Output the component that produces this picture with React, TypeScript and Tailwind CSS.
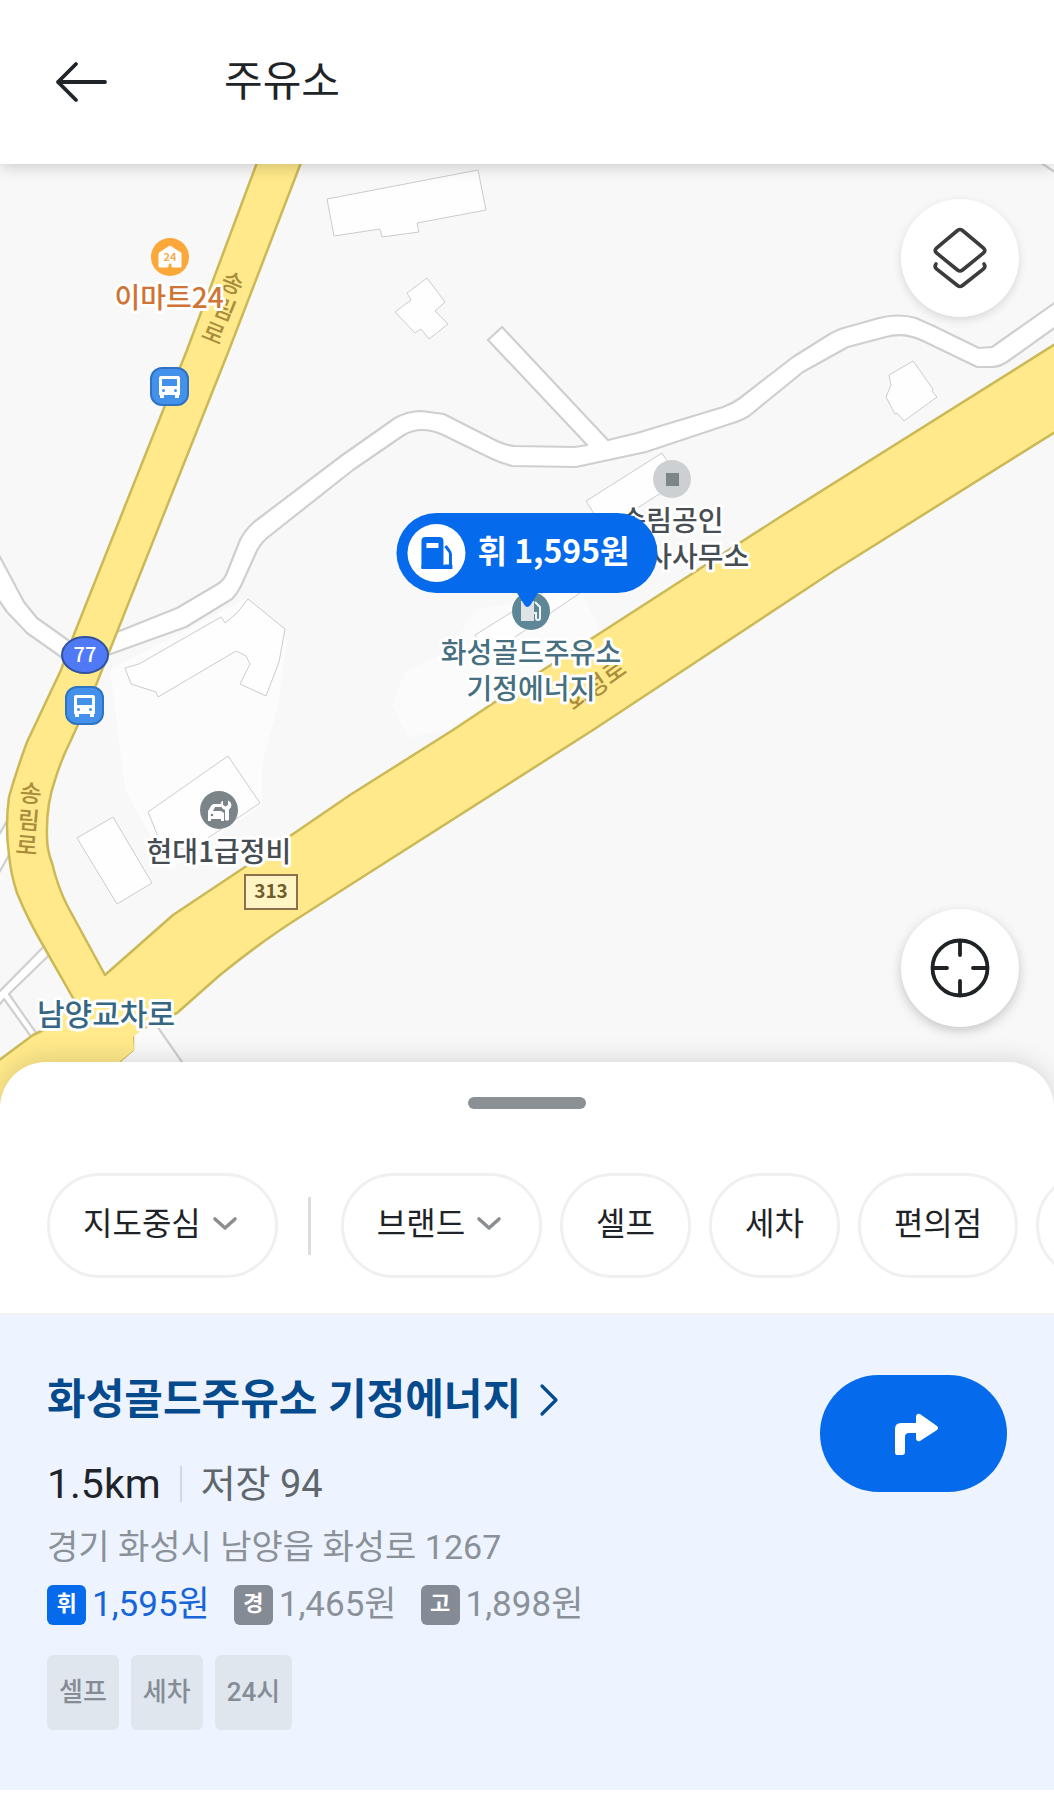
import React from "react";

const uiFont = "font-['Roboto','Noto_Sans_CJK_KR',sans-serif]";
const krFont = "font-['Noto_Sans_CJK_KR',sans-serif]";

function BusStop({ x, y }: { x: number; y: number }) {
  return (
    <g transform={`translate(${x} ${y})`}>
      <rect x="1" y="1" width="37" height="37" rx="11" fill="#4391ea" stroke="#2f73c4" strokeWidth="2" />
      <path
        d="M11 9h17a2 2 0 0 1 2 2v17h-1v3h-4v-3H14v3h-4v-3H9V11a2 2 0 0 1 2-2Z"
        fill="#fff"
      />
      <rect x="12" y="12" width="15" height="7" fill="#4391ea" />
      <circle cx="13.500" cy="23.500" r="1.500" fill="#4391ea" />
      <circle cx="25.500" cy="23.500" r="1.500" fill="#4391ea" />
    </g>
  );
}

function MapDrawing() {
  return (
    <svg
      viewBox="0 164 1054 944"
      preserveAspectRatio="xMidYMid slice"
      className={`absolute inset-0 size-full ${krFont}`}
      role="img"
      aria-label="화성골드주유소 기정에너지 주변 지도"
    >
      <rect x="0" y="164" width="1054" height="944" fill="#f8f8f8" />

      {/* plots */}
      <path d="M110 670 L245 599 L287 640 L278 705 L262 765 L262 805 L170 870 L125 790Z" fill="#fcfcfc" />
      <path d="M475 610 L580 590 L600 630 L450 728 L408 738 L392 705 L405 672 L450 650Z" fill="#fbfbfb" />

      {/* buildings */}
      <g fill="#fefefe" stroke="#cccccc" strokeWidth="1">
        <path d="M327 199 L478 170 L486 210 L417 223 L419 232 L382 237 L380 229 L334 236Z" />
        <path d="M427 278 L445 302 L435 311 L448 324 L429 339 L421 329 L415 333 L395 312 L411 300 L407 293Z" />
        <path d="M913 361 L933 389 L932 391 L937 397 L904 421 L897 413 L895 414 L886 397 L891 385 L889 375Z" />
        <path d="M586 501 L662 453 L680 481 L604 529Z" />
        <path d="M475 635 L568 577 L580 593 L515 637 L485 655Z" />
        <path d="M248 599 L285 629 L279 662 L266 696 L240 684 L250 664 L246 656 L236 651 L158 697 L156 692 L131 684 L125 668 L139 664 L221 617 L225 623 L237 613Z" />
        <path d="M228 756 L260 803 L190 850 L162 846 L148 812Z" />
        <path d="M113 817 L152 883 L117 904 L77 838Z" />
      </g>

      {/* local roads */}
      <g fill="#ffffff" stroke="#cfcfcf" strokeWidth="2.200" strokeLinejoin="round">
        <path d="M-5 547 L0 557 L24 602 L37 618 L68 640 L90 655 L80 670 L61 657 L27 633 L7 612 L0 602 L-5 594Z" />
        <path d="M95 640 L122 630 L177 608 L216 585 Q223 581 226 575 L240 540 Q245 530 254 522 L341 456 L395 418 Q408 411 421 411 L444 414 L497 441 Q506 445 514 446 L575 447 L587 445 L488 340 L502 327 L608 440 L637 433 L723 407 Q732 404 740 398 L793 357 L828 335 Q838 329 847 327 L879 318 Q898 313 916 318 L936 327 L979 348 L992 347 L1060 299 L1060 324 L1007 362 Q999 367 992 367 L977 367 L923 341 Q904 332 886 337 L848 347 L803 372 L749 416 Q741 421 730 424 L646 452 L576 467 L512 466 Q500 463 490 458 L443 435 Q421 425 404 435 L353 470 L267 538 Q259 545 255 555 L241 586 Q237 594 232 599 L186 627 L108 655Z" />
        <path d="M60 930 L-5 996 L-5 1010 L4 999 L32 1038 L39 1037 L9 994 L70 935Z" />
        <path d="M12 812 L-5 842 L-5 880 L14 846Z" />
        <path d="M1041 163 L1058 174 L1058 160Z" fill="#fcfcfc" />
        <path d="M125 980 L182 1062 L212 1108 L100 1108Z" fill="#fafafa" />
      </g>

      {/* trunk roads */}
      <path
        d="M258 160 L187 350 L73 637 L61 670 L27 742 Q16 772 9 797 Q5 826 9 855 Q11 875 17 893 Q28 920 44 947 L73 998 L85 1010 L33 1035 L-6 1064 L-6 1112 L50 1112 L120 1061 L133 1050 L133 1033 L177 1013 L220 975 Q262 941 300 917 L350 885 L593 730 L835 570 L1060 429 L1060 341 L780 517 L543 670 L453 730 L350 795 L245 867 L173 915 L105 975 L68 907 Q58 888 52 863 Q47 850 47 837 Q46 805 55 780 Q61 760 71 740 L96 685 L229 350 L302 160Z"
        fill="#ffe98a"
        stroke="#cbb957"
        strokeWidth="2.500"
        strokeLinejoin="round"
      />
      <path d="M70 1005 L170 1005 L133 1037 L134 1050 L118 1063 L60 1112 L10 1090 L45 1038Z" fill="#ffe98a" />

      {/* road names */}
      <g
        fontSize="24"
        fontWeight="500"
        fill="#a98c3c"
        stroke="#ffe98a"
        strokeWidth="2"
        paintOrder="stroke"
      >
        <text x="219 211 200" y="287 313 337" rotate="22">
          송림로
        </text>
        <text x="19 17 15" y="801 828 853" rotate="5">
          송림로
        </text>
        <text x="574 592 610" y="712 699 685" rotate="-35">
          화성로
        </text>
      </g>

      {/* places */}
      <circle cx="170" cy="257" r="19" fill="#fba83a" />
      <path d="M159 267v-14l11-7 11 7v14h-9v-2a2 2 0 0 0-4 0v2Z" fill="#fff" stroke="#fff" strokeLinejoin="round" />
      <text x="170" y="261" textAnchor="middle" fontSize="11" fontWeight="700" fill="#f3ab55">
        24
      </text>

      <BusStop x={150} y={367} />
      <BusStop x={65} y={686} />

      <ellipse cx="85" cy="655" rx="23" ry="18" fill="#5079f6" stroke="#31529f" strokeWidth="2" />
      <text x="85" y="662" textAnchor="middle" fontSize="20" fontWeight="500" fill="#fff">
        77
      </text>

      <circle cx="672" cy="479" r="19" fill="#cdd0d3" />
      <rect x="666" y="473" width="13" height="13" fill="#7d8589" />

      <circle cx="531" cy="611" r="19" fill="#5d8796" />
      <path d="M521 601h13v20h-13z" fill="#dfe3e6" />
      <path d="M535 602l5 5v11a2 2 0 0 1-4 0v-5h-2" fill="none" stroke="#f2f5f6" strokeWidth="2" />

      <circle cx="219" cy="810" r="19" fill="#7b8488" />
      <path d="M208 811l3-5q1-2 3-2h7v3h-6l-2 4h8l3 2v8h-3v-2h-10v2h-3v-8Z" fill="#fff" />
      <circle cx="212" cy="815" r="1.300" fill="#7b8488" />
      <path
        d="M225.500 820v-10.500a5 5 0 0 1-3-8.500v4l3 2 3-2v-4a5 5 0 0 1 0 8.500V820Z"
        fill="#fff"
        stroke="#fff"
        strokeLinejoin="round"
      />

      <rect x="245" y="875" width="52" height="34" fill="#fff5c4" stroke="#8d6f50" strokeWidth="2" />
      <text x="271" y="898" textAnchor="middle" fontSize="19" fontWeight="700" fill="#6f5d2c">
        313
      </text>

      <g
        fontSize="28"
        fontWeight="500"
        stroke="#ffffff"
        strokeWidth="6"
        strokeLinejoin="round"
        paintOrder="stroke"
        textAnchor="middle"
      >
        <text x="169" y="308" fill="#cf7434">
          이마트24
        </text>
        <text x="219" y="862" fill="#454d53">
          현대1급정비
        </text>
        <text x="672" y="531" fill="#474e53">
          송림공인
        </text>
        <text x="672" y="567" fill="#474e53">
          중개사사무소
        </text>
        <text x="531" y="663" fill="#466f7f">
          화성골드주유소
        </text>
        <text x="531" y="699" fill="#466f7f">
          기정에너지
        </text>
        <text x="106" y="1025" fontSize="30" fill="#356785">
          남양교차로
        </text>
      </g>
    </svg>
  );
}

function Chevron() {
  return (
    <svg viewBox="0 0 28 28" className="size-7" fill="none" aria-hidden="true">
      <path d="M4 9l10 9 10-9" stroke="#8c8f92" strokeWidth="3.600" strokeLinecap="round" strokeLinejoin="round" />
    </svg>
  );
}

function Chip({ label, menu = false }: { label: string; menu?: boolean }) {
  return (
    <button
      type="button"
      aria-haspopup={menu ? "listbox" : undefined}
      className={`flex h-[105px] shrink-0 items-center gap-2.5 rounded-full border-[3px] border-[#f0f0f1] bg-white pb-1 text-[32px] leading-10 text-[#1f2327] ${
        menu ? "pr-9 pl-[33px]" : "px-[33px]"
      }`}
    >
      <span>{label}</span>
      {menu && <Chevron />}
    </button>
  );
}

const prices = [
  { mark: "휘", price: "1,595원", active: true },
  { mark: "경", price: "1,465원", active: false },
  { mark: "고", price: "1,898원", active: false },
];

const tags = ["셀프", "세차", "24시"];

export default function App() {
  return (
    <div className={`flex min-h-screen flex-col overflow-hidden bg-white ${uiFont}`}>
      <header className="relative z-10 flex h-[164px] shrink-0 items-center gap-28 bg-white px-[52px] shadow-[0_2px_16px_rgba(0,0,0,0.2)]">
        <button type="button" aria-label="뒤로" className="size-15">
          <svg viewBox="0 0 60 60" className="size-full" fill="none" aria-hidden="true">
            <path
              d="M53 30H6M24 12L6 30l18 18"
              stroke="#1f2428"
              strokeWidth="3.800"
              strokeLinecap="round"
              strokeLinejoin="round"
            />
          </svg>
        </button>
        <h1 className="text-[42px] leading-[60px] text-[#1f2428]">주유소</h1>
      </header>

      <main className="flex flex-1 flex-col">
        <section aria-label="지도" className="relative min-h-[600px] flex-1 overflow-hidden">
          <MapDrawing />

          <button
            type="button"
            className="absolute top-[37%] left-1/2 flex h-20 -translate-x-1/2 items-center gap-3 rounded-full bg-[#056aeb] pr-7 pl-[11px] text-white"
          >
            <span className="flex size-[58px] shrink-0 items-center justify-center rounded-full bg-white">
              <svg viewBox="0 0 34 34" className="size-[34px]" aria-hidden="true">
                <path d="M2 32V5a4 4 0 0 1 4-4h14a4 4 0 0 1 4 4v27Z" fill="#056aeb" />
                <rect x="7" y="7" width="12" height="5" fill="#fff" />
                <path d="M26 10l3 4q2 2 2 4v12h-6" fill="none" stroke="#056aeb" strokeWidth="3" />
                <path d="M2 29h31v4H2z" fill="#056aeb" />
              </svg>
            </span>
            <span className="pb-2 text-[32px] leading-10 font-bold whitespace-nowrap font-['Noto_Sans_CJK_KR',sans-serif]">휘 1,595원</span>
            <svg viewBox="0 0 22 18" className="absolute top-[79px] left-1/2 h-[18px] w-[22px] -translate-x-1/2" aria-hidden="true">
              <path d="M0 0h22l-8 13q-3 4-6 0Z" fill="#056aeb" />
            </svg>
          </button>

          <button
            type="button"
            aria-label="지도 레이어"
            className="absolute top-[35px] right-[35px] flex size-[118px] items-center justify-center rounded-full bg-white shadow-[0_3px_10px_rgba(0,0,0,0.13)]"
          >
            <svg viewBox="0 0 60 64" className="h-16 w-15" fill="none" aria-hidden="true">
              <path
                d="M27.500 4.500Q30 2.500 32.500 4.500L53.500 22Q56 24.500 53.500 27L32.500 44Q30 46 27.500 44L6.500 27Q4 24.500 6.500 22Z"
                stroke="#3a3c3e"
                strokeWidth="3.600"
              />
              <path
                d="M6 38Q4 40.500 6.500 43L27.500 59.500Q30 61.500 32.500 59.500L53.500 43Q56 40.500 54 38"
                stroke="#3a3c3e"
                strokeWidth="3.600"
                strokeLinecap="round"
              />
            </svg>
          </button>

          <button
            type="button"
            aria-label="현재 위치"
            className="absolute right-[35px] bottom-[81px] flex size-[118px] items-center justify-center rounded-full bg-white shadow-[0_4px_12px_rgba(0,0,0,0.2)]"
          >
            <svg viewBox="0 0 60 60" className="size-15" fill="none" aria-hidden="true">
              <g stroke="#1f2326" strokeWidth="3.800" strokeLinecap="round">
                <circle cx="30" cy="30" r="27.500" />
                <path d="M30 3v14M30 43v14M3 30h14M43 30h14" />
              </g>
            </svg>
          </button>
        </section>

        <section
          aria-label="주유소 목록"
          className="relative -mt-[46px] rounded-t-[46px] bg-white pb-2.5 shadow-[0_-3px_24px_rgba(0,0,0,0.13)]"
        >
          <div className="flex justify-center pt-[35px]">
            <div className="h-3 w-[118px] rounded-full bg-[#8b9095]" />
          </div>

          <div className="mt-16 flex items-center gap-[18px] overflow-hidden border-b-2 border-[#f0f1f1] pb-[35px] pl-[47px]">
            <Chip label="지도중심" menu />
            <div className="mx-3 h-[58px] w-[3px] shrink-0 bg-[#dcdcdd]" />
            <Chip label="브랜드" menu />
            <Chip label="셀프" />
            <Chip label="세차" />
            <Chip label="편의점" />
            <button type="button" aria-label="필터 더보기" className="h-[105px] w-[130px] shrink-0 rounded-full border-[3px] border-[#f0f0f1] bg-white" />
          </div>

          <article className="flex items-start justify-between bg-[#edf4ff] px-[47px] pb-15">
            <div className="min-w-0 pt-[55px]">
              <h2>
                <a href="#station" className="flex items-center gap-4 text-[42px] leading-[60px] font-bold text-[#054a8c]">
                  화성골드주유소 기정에너지
                  <svg viewBox="0 0 24 36" className="h-9 w-6 shrink-0" fill="none" aria-hidden="true">
                    <path d="M5 4l14 14L5 32" stroke="#054a8c" strokeWidth="3.200" strokeLinecap="round" strokeLinejoin="round" />
                  </svg>
                </a>
              </h2>
              <div className="mt-[30px] flex items-center leading-12">
                <span className="text-[41px] text-[#1f242a]">1.5km</span>
                <span className="mx-[19px] h-9 w-0.5 bg-[#d3d9e1]" />
                <span className="text-[38px] text-[#60666e]">저장 94</span>
              </div>
              <p className="mt-[17px] text-[34px] leading-[44px] text-[#8b9199]">경기 화성시 남양읍 화성로 1267</p>
              <ul className="mt-4 flex gap-6">
                {prices.map((p) => (
                  <li key={p.mark} className="flex items-center gap-1.5">
                    <span
                      className={`flex h-10 w-[39px] items-center justify-center rounded-md pb-1 text-[22px] font-bold text-white ${
                        p.active ? "bg-[#056aeb]" : "bg-[#858b95]"
                      }`}
                    >
                      {p.mark}
                    </span>
                    <span className={`text-[35px] leading-10 ${p.active ? "text-[#1765d8]" : "text-[#8b9199]"}`}>{p.price}</span>
                  </li>
                ))}
              </ul>
              <ul className="mt-[30px] flex gap-3">
                {tags.map((t) => (
                  <li
                    key={t}
                    className="flex h-[75px] items-center rounded-md bg-[#dfe6ee] px-3 pb-0.5 text-[26px] leading-8 font-medium text-[#858c95]"
                  >
                    {t}
                  </li>
                ))}
              </ul>
            </div>
            <button
              type="button"
              aria-label="길찾기"
              className="mt-15 flex h-[117px] w-[187px] shrink-0 items-center justify-center rounded-full bg-[#056aeb]"
            >
              <svg viewBox="-4 0 50 44" className="h-11 w-[50px]" aria-hidden="true">
                <path
                  d="M2 40V17Q2 11 8 11H23V4Q24 1 27 2L44 14Q46 16 44 18L27 29Q24 30 23 27V21H16Q12 21 12 25V40Q12 43 9 43H4Q2 43 2 40Z"
                  fill="#fff"
                />
              </svg>
            </button>
          </article>
        </section>
      </main>
    </div>
  );
}
